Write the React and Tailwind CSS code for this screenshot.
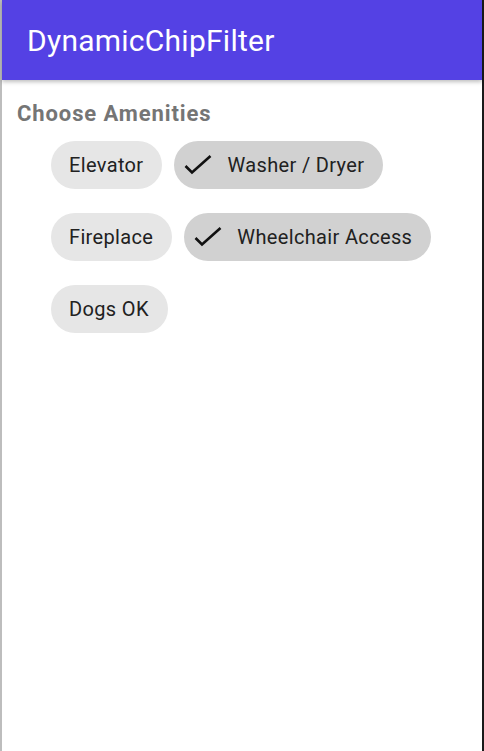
import React from "react";

const amenities = [
  { name: "Elevator", checked: false },
  { name: "Washer / Dryer", checked: true },
  { name: "Fireplace", checked: false },
  { name: "Wheelchair Access", checked: true },
  { name: "Dogs OK", checked: false },
];

function Chip({ name, checked }) {
  if (checked) {
    return (
      <div className="flex h-[48px] items-center rounded-full bg-[#d1d1d1] pl-[10px] pr-[19px]">
        <svg width="28" height="20" viewBox="0 0 28 20" className="mr-[15px]">
          <polyline points="1.5,11 8,17.5 26.5,1" fill="none" stroke="#111" strokeWidth="2.6" />
        </svg>
        <span className="text-[20px] tracking-[0.35px] text-[#212121]">{name}</span>
      </div>
    );
  }
  return (
    <div className="flex h-[48px] items-center rounded-full bg-[#e6e6e6] pl-[18px] pr-[19px]">
      <span className="text-[20px] tracking-[0.35px] text-[#212121]">{name}</span>
    </div>
  );
}

export default function App() {
  return (
    <div className="flex h-[751px] w-full bg-white font-['Roboto',sans-serif]">
      <div className="w-[2px] bg-[#bdbdbd]" />
      <main className="flex flex-1 flex-col">
        <header className="relative z-10 flex h-[80px] items-center bg-[#5441e4] pl-[25px] shadow-[0_2px_4px_rgba(0,0,0,0.25)]">
          <h1 className="text-[30px] tracking-[0.25px] text-white">DynamicChipFilter</h1>
        </header>
        <h2 className="mt-[21px] pl-[15px] text-[22px] font-bold leading-[26px] tracking-[0.9px] text-[#757575]">
          Choose Amenities
        </h2>
        <div className="mt-[14px] flex max-w-[451px] flex-wrap gap-x-[12px] gap-y-[24px] pl-[49px]">
          {amenities.map((a) => (
            <Chip key={a.name} {...a} />
          ))}
        </div>
      </main>
      <div className="w-[2px] bg-[#1a1a1a]" />
    </div>
  );
}
